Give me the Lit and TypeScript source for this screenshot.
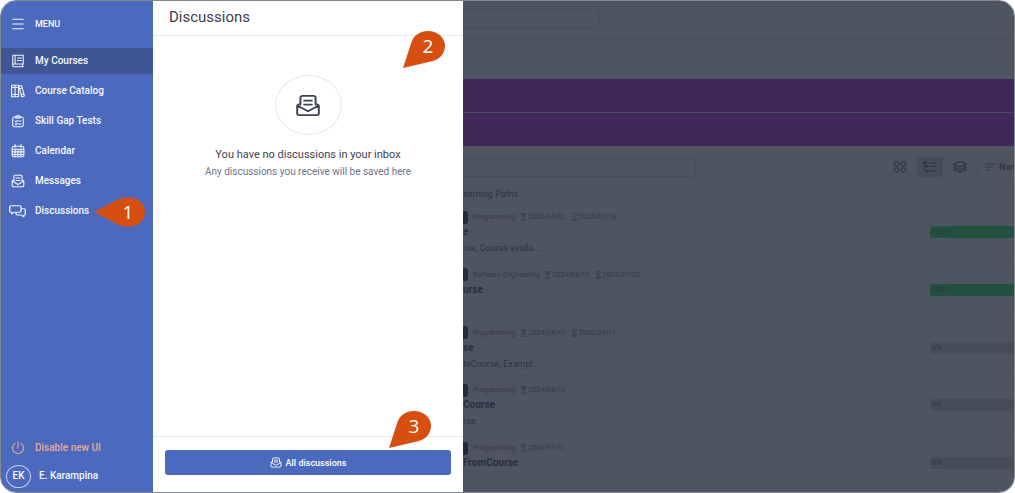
import { LitElement, html, css, svg, nothing } from "lit";
import { customElement, property } from "lit/decorators.js";
import { classMap } from "lit/directives/class-map.js";

const glyphs: Record<string, unknown> = {
  menu: svg`<path d="M3 4h18M3 12h18M3 20h18"/>`,
  book: svg`<path d="M4 2h17v15H5a2 2 0 0 0-2 2.500V4a2 2 0 0 1 1-2zM7 2v15M3 19.500A2 2 0 0 0 5 22h16M20 17v5M11 7h7M11 11h7"/>`,
  shelf: svg`<path d="M1 2h6v20H1zM7 2h6v20H7zM1 6h12M1 18h12M13.500 4l4.500-1.500 5 18-4.500 1.500zM15 8l4-1M18 18l4-1"/>`,
  clipboard: svg`<rect x="3" y="5" width="18" height="17" rx="3"/><path d="M8 7V4h2a2 2 0 0 1 4 0h2v3zM7 12l1.500 1.500L11 11M13 12h4M7 17l1.500 1.500L11 16M13 17h4"/>`,
  calendar: svg`<rect x="2" y="4" width="20" height="18" rx="3"/><path d="M2 9h20M7 1v5M17 1v5M2 13.500h20M2 18h20M7 9v13M12 9v13M17 9v13"/>`,
  mail: svg`<path d="M5 11V4a2 2 0 0 1 2-2h10a2 2 0 0 1 2 2v7M8.500 7h7M8.500 11h7M5 10l-3 2v8a2 2 0 0 0 2 2h16a2 2 0 0 0 2-2v-8l-3-2M2 12l10 6 10-6"/>`,
  chat: svg`<path d="M3 3h12a2 2 0 0 1 2 2v7a2 2 0 0 1-2 2H8l-4 3v-3H3a2 2 0 0 1-2-2V5a2 2 0 0 1 2-2zM17 8h4a2 2 0 0 1 2 2v7a2 2 0 0 1-2 2v3l-4-3h-5a2 2 0 0 1-2-2v-3"/>`,
  power: svg`<path d="M12 1v11M7 4a9.500 9.500 0 1 0 10 0"/>`,
  grid: svg`<rect x="2" y="2" width="8" height="8" rx="2"/><rect x="14" y="2" width="8" height="8" rx="2"/><rect x="2" y="14" width="8" height="8" rx="2"/><rect x="14" y="14" width="8" height="8" rx="2"/>`,
  tree: svg`<path d="M3 2v18h4M3 11h4M11 4h11M13 11h9M13 20h9"/><path fill="currentColor" d="M2 2h3v3H2zM7 10h2v2H7zM7 19h2v2H7z"/>`,
  layers: svg`<path d="M12 1l11 5.500-11 5.500L1 6.500zM4 10.500l-3 1.500 11 5.500L23 12l-3-1.500M4 16l-3 1.500L12 23l11-5.500-3-1.500"/>`,
  sort: svg`<path d="M1 3h22M1 12h15M1 21h9"/>`,
  glassFull: svg`<path d="M4 2h16M4 22h16M6 2v4l5 6-5 6v4M18 2v4l-5 6 5 6v4M7 5h10M9 8h6"/>`,
  glassEmpty: svg`<path d="M4 2h16M4 22h16M6 2v4l5 6-5 6v4M18 2v4l-5 6 5 6v4M8 19h8"/>`,
};

@customElement("ui-icon")
class UiIcon extends LitElement {
  @property() name = "";
  static styles = css`
    :host { display: inline-flex; flex: none; width: 14px; height: 14px; }
    svg { width: 100%; height: 100%; fill: none; stroke: currentColor; stroke-width: var(--stroke, 1.8); stroke-linecap: round; stroke-linejoin: round; }
  `;
  render() {
    return html`<svg viewBox="0 0 24 24" preserveAspectRatio="none" aria-hidden="true">${glyphs[this.name]}</svg>`;
  }
}

@customElement("callout-pin")
class CalloutPin extends LitElement {
  @property() label = "";
  @property() point = "corner";
  static styles = css`
    :host { display: block; }
    .pin { position: relative; width: 42px; height: 38px; color: #fff; font: 19px/30px "Open Sans", "Noto Sans", sans-serif; }
    .side { width: 51px; height: 30px; }
    svg { position: absolute; inset: 0; width: 100%; height: 100%; fill: #d64f10; }
    .num { position: absolute; top: 0; right: 0; width: 34px; text-align: center; }
  `;
  render() {
    const side = this.point === "side";
    return html`<div class=${classMap({ pin: true, side })}>
      ${side
        ? html`<svg viewBox="0 0 51 30"><path d="M0 15L24 2.500C38-4 51 4 51 15S38 34 24 27.500z"/></svg>`
        : html`<svg viewBox="0 0 42 38"><path d="M0 37L8.500 11C11 4 17 0 25 0c10 0 17 7 17 15 0 7-5 13-12 15z"/></svg>`}
      <span class="num">${this.label}</span>
    </div>`;
  }
}

interface Course { category: string; start: string; end?: string; title: string; note?: string; progress: number }

@customElement("app-root")
class AppRoot extends LitElement {
  private nav = [
    ["book", "My Courses"],
    ["shelf", "Course Catalog"],
    ["clipboard", "Skill Gap Tests"],
    ["calendar", "Calendar"],
    ["mail", "Messages"],
    ["chat", "Discussions"],
  ];

  private courses: Course[] = [
    { category: "Programming", start: "2024/04/02", end: "2024/07/10", title: "e", note: "rse, Course availa...", progress: 100 },
    { category: "Software Engineering", start: "2024/04/10", end: "2024/07/20", title: "urse", progress: 100 },
    { category: "Programming", start: "2024/04/10", end: "2030/04/11", title: "se", note: "teCourse, Exampl...", progress: 0 },
    { category: "Programming", start: "2024/04/10", title: "Course", note: "rse", progress: 0 },
    { category: "Programming", start: "2040/01/01", title: "FromCourse", progress: 0 },
  ];

  static styles = css`
    :host { display: block; background: #fff; font-family: Roboto, "Liberation Sans", sans-serif; }
    *, *::before { box-sizing: border-box; }
    button { font: inherit; color: inherit; background: none; border: 0; padding: 0; cursor: pointer; }
    a { color: inherit; text-decoration: none; }
    h1, h2, h3, p { margin: 0; font-weight: 400; }

    .shell { display: grid; grid-template-columns: 152px 310px minmax(0, 1fr); min-height: 100vh; border: 1px solid #858990; border-radius: 16px; overflow: hidden; position: relative; }

    .sidebar { display: flex; flex-direction: column; background: #4c6abd; color: #f4f7ff; font-size: 10px; line-height: 16px; font-weight: 500; }
    .menu { display: flex; align-items: center; gap: 10px; height: 47px; padding: 0 0 2px 10px; font-size: 9px; }
    .links { display: flex; flex-direction: column; gap: 4px; }
    .link { display: flex; align-items: center; gap: 10px; height: 26px; padding-left: 10px; }
    .link.active { background: #3f5694; }
    .link.wide { padding-left: 8px; gap: 9px; }
    .link.wide ui-icon { width: 17px; }
    .account { margin-top: auto; padding-bottom: 4px; }
    .disable { color: #e9a793; }
    .user { display: flex; align-items: center; gap: 8px; height: 24px; margin-top: 3px; padding-left: 5px; }
    .avatar { display: grid; place-items: center; width: 25px; height: 23px; border: 1px solid #c3cff0; border-radius: 50%; }

    .panel { display: flex; flex-direction: column; background: #fff; color: #3f4354; }
    .panel-head { height: 35px; padding: 6px 16px; border-bottom: 1px solid #e8e9ec; }
    .panel-head h1 { font-size: 15px; line-height: 20px; color: #3c404f; }
    .empty { flex: 1; display: flex; flex-direction: column; align-items: center; padding-top: 39px; }
    .ring { display: grid; place-items: center; width: 67px; height: 60px; border: 1px solid #e9e9ec; border-radius: 50%; margin-bottom: 11px; }
    .ring ui-icon { width: 26px; height: 23px; }
    .empty h2 { font-size: 11px; line-height: 18px; }
    .empty p { font-size: 10px; line-height: 16px; color: #6f7387; }
    .panel-foot { padding: 13px 12px 17px; border-top: 1px solid #e8e9ec; }
    .all { display: flex; align-items: center; justify-content: center; gap: 4px; width: 100%; height: 25px; border-radius: 3px; background: #4c6abd; color: #fff; font-size: 9px; font-weight: 500; }
    .all ui-icon { width: 12px; height: 11px; }

    .page { display: flex; flex-direction: column; background: #4e5560; color: #2c3344; overflow: hidden; }
    .topbar { height: 38px; padding-top: 8px; border-bottom: 1px solid #484f5a; }
    .field { display: block; height: 19px; padding: 0 8px; background: none; border: 1px solid #474e5a; border-left: 0; border-radius: 0 3px 3px 0; color: inherit; font: inherit; font-size: 9px; }
    .top-search { width: 137px; }
    .banner { display: grid; grid-template-rows: 1fr 1fr; gap: 1px; height: 67px; margin-top: 40px; background: #4b4763; }
    .banner div { background: #41285b; }
    .tools { display: flex; align-items: center; height: 20px; margin-top: 11px; }
    .course-search { width: 233px; }
    .views { display: flex; gap: 4px; margin-left: auto; }
    .view { display: grid; place-items: center; width: 26px; height: 20px; border-radius: 3px; color: #2b3142; }
    .view.on { background: #464c59; }
    .sort { display: flex; align-items: center; gap: 3px; width: 37px; height: 20px; margin-left: 4px; padding-left: 7px; border: 1px solid #495059; border-right: 0; border-radius: 3px 0 0 3px; overflow: hidden; font-size: 9px; font-weight: 500; }
    .view ui-icon { height: 12px; }
    .sort ui-icon { width: 11px; height: 8px; }
    .tab { margin-top: 10px; font-size: 9px; line-height: 14px; }
    .list { flex: 1; display: grid; grid-auto-rows: 1fr; margin: 2px 0 0; padding: 0; list-style: none; }
    .row { display: flex; justify-content: space-between; border-bottom: 1px solid #495059; overflow: hidden; }
    .row:last-child { border: 0; }
    .meta { display: flex; align-items: center; gap: 5px; height: 14px; margin-top: 7px; font-size: 7px; color: #333a49; }
    .meta time { display: flex; align-items: center; gap: 1px; }
    .meta ui-icon { width: 7px; height: 8px; --stroke: 2; }
    .chip { width: 5px; height: 13px; border-radius: 0 3px 3px 0; background: #242b3b; }
    .row h3 { font-size: 10px; line-height: 16px; font-weight: 700; color: #272e3f; }
    .note { font-size: 9px; line-height: 16px; }
    .bar { position: relative; flex: none; width: 84px; height: 12px; margin-top: 23px; border-radius: 2px 0 0 2px; background: #464d59; overflow: hidden; font-size: 8px; line-height: 12px; }
    .fill { height: 100%; background: #22513f; }
    .pct { position: absolute; inset: 0 auto 0 2px; }

    .mark { position: absolute; }
    .m1 { left: 93px; top: 196px; }
    .m2 { left: 402px; top: 30px; }
    .m3 { left: 388px; top: 410px; }
  `;

  render() {
    return html`<div class="shell">
      <nav class="sidebar" aria-label="Main">
        <button class="menu"><ui-icon name="menu"></ui-icon>MENU</button>
        <div class="links">
          ${this.nav.map(([icon, label], i) => html`<a href="#" class=${classMap({ link: true, active: i === 0, wide: icon === "chat" })}><ui-icon name=${icon}></ui-icon>${label}</a>`)}
        </div>
        <div class="account">
          <a href="#" class="link disable"><ui-icon name="power"></ui-icon>Disable new UI</a>
          <a href="#" class="user"><span class="avatar">EK</span>E. Karampina</a>
        </div>
      </nav>

      <section class="panel">
        <header class="panel-head"><h1>Discussions</h1></header>
        <div class="empty">
          <div class="ring"><ui-icon name="mail"></ui-icon></div>
          <h2>You have no discussions in your inbox</h2>
          <p>Any discussions you receive will be saved here</p>
        </div>
        <footer class="panel-foot"><button class="all"><ui-icon name="mail"></ui-icon>All discussions</button></footer>
      </section>

      <main class="page">
        <div class="topbar"><input class="field top-search" type="search" aria-label="Search" /></div>
        <div class="banner"><div></div><div></div></div>
        <div class="tools">
          <input class="field course-search" type="search" aria-label="Search courses" />
          <div class="views">
            <button class="view" aria-label="Grid"><ui-icon name="grid"></ui-icon></button>
            <button class="view on" aria-label="Tree"><ui-icon name="tree"></ui-icon></button>
            <button class="view" aria-label="Layers"><ui-icon name="layers"></ui-icon></button>
          </div>
          <button class="sort"><ui-icon name="sort"></ui-icon>Name</button>
        </div>
        <h2 class="tab">earning Paths</h2>
        <ul class="list">
          ${this.courses.map((c) => html`<li class="row">
            <div>
              <div class="meta">
                <span class="chip"></span><span>${c.category}</span>
                <time><ui-icon name="glassFull"></ui-icon>${c.start}</time>
                ${c.end ? html`<time><ui-icon name="glassEmpty"></ui-icon>${c.end}</time>` : nothing}
              </div>
              <h3>${c.title}</h3>
              ${c.note ? html`<p class="note">${c.note}</p>` : nothing}
            </div>
            <div class="bar"><div class="fill" style="width:${c.progress}%"></div><span class="pct">${c.progress}%</span></div>
          </li>`)}
        </ul>
      </main>

      <callout-pin class="mark m1" label="1" point="side"></callout-pin>
      <callout-pin class="mark m2" label="2"></callout-pin>
      <callout-pin class="mark m3" label="3"></callout-pin>
    </div>`;
  }
}
